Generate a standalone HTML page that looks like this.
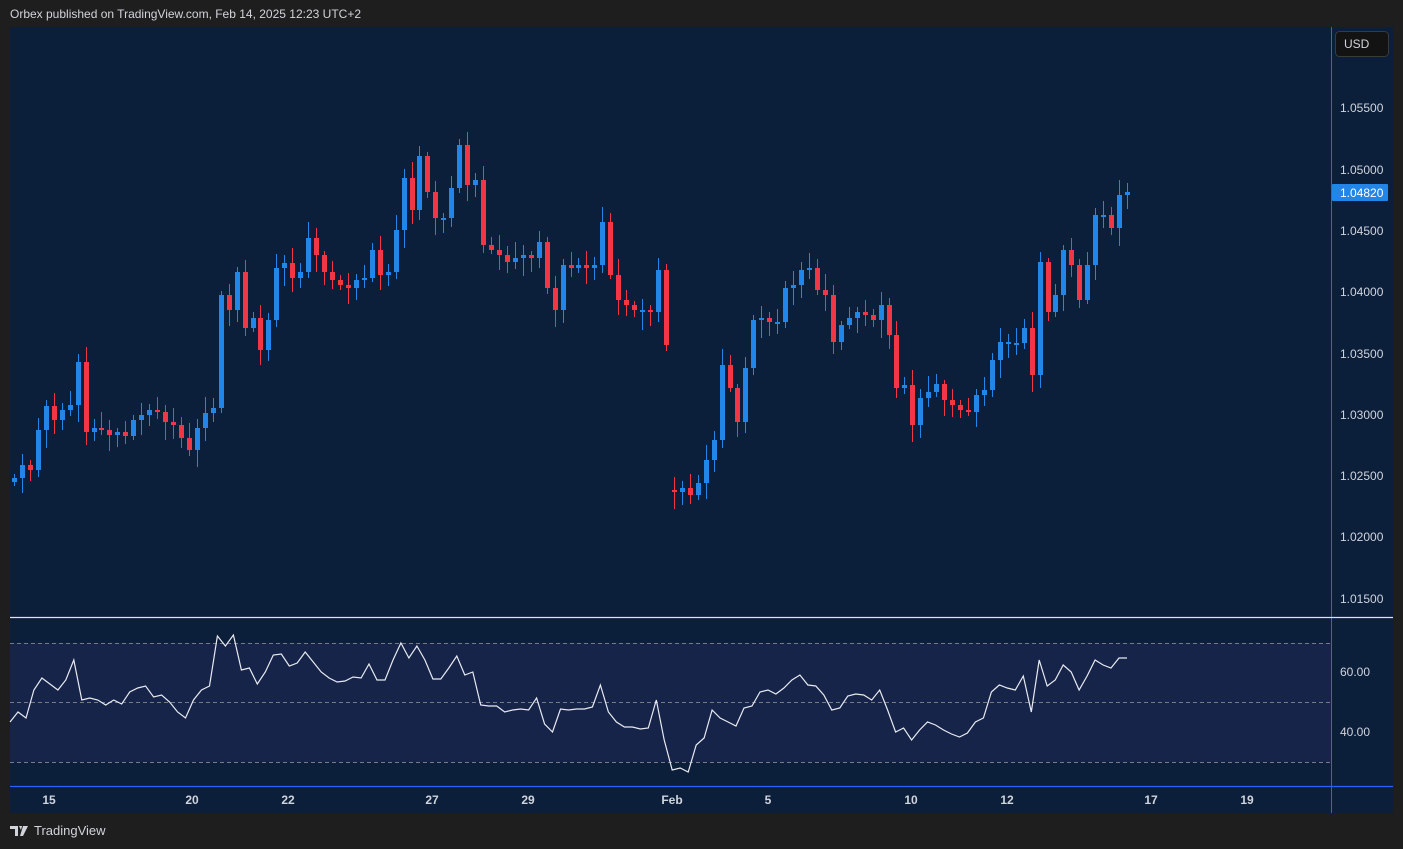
<!DOCTYPE html>
<html><head><meta charset="utf-8"><style>
html,body{margin:0;padding:0;background:#1e1e1e;width:1403px;height:849px;overflow:hidden;font-family:"Liberation Sans",sans-serif}
#hdr{position:absolute;left:10px;top:7px;font-size:12px;color:#d1d4dc}
#ft{position:absolute;left:10px;top:823px;font-size:13px;color:#d1d4dc;display:flex;align-items:center;gap:4px}
svg{position:absolute;left:0;top:0}
</style></head><body>
<div id="hdr">Orbex published on TradingView.com, Feb 14, 2025 12:23 UTC+2</div>
<svg id="s" width="1403" height="849"></svg>
<div id="ft"><svg style="position:static" width="20" height="12" viewBox="0 0 20 12"><path d="M0 1h8v10H5V4H0z M9 1h3l-1 4z M13 1h5l-5 10h-3z" fill="#d1d4dc"/></svg>TradingView</div>
<script>
const NS="http://www.w3.org/2000/svg",s=document.getElementById('s');
function el(t,a,txt){const e=document.createElementNS(NS,t);for(const k in a)e.setAttribute(k,a[k]);if(txt)e.textContent=txt;s.appendChild(e);return e;}
el('rect',{x:10,y:27,width:1383,height:786,fill:'#0b1e3a'});
el('rect',{x:10,y:643,width:1321,height:119,fill:'#16244a'});
el('line',{x1:1331.5,y1:27,x2:1331.5,y2:813,stroke:'#2962ff','stroke-width':1});
el('line',{x1:10,y1:617.5,x2:1393,y2:617.5,stroke:'#e0e3eb','stroke-width':1.3});
el('line',{x1:10,y1:786.5,x2:1393,y2:786.5,stroke:'#2962ff','stroke-width':1.3});
[643,702,762].forEach(y=>el('line',{x1:10,y1:y+.5,x2:1331,y2:y+.5,stroke:'#787b86','stroke-dasharray':'4 3','stroke-width':1}));
const C=[478,465,470,430,406,420,410,405,362,432,428,430,435,432,436,420,415,410,412,422,425,438,450,428,413,408,295,310,272,328,318,350,320,268,263,278,272,238,255,272,280,285,288,280,278,250,275,272,230,178,210,156,192,218,218,188,145,185,180,245,250,255,262,258,255,258,242,288,310,265,268,265,268,265,222,275,300,305,310,310,312,270,345,492,488,495,483,460,440,365,388,422,368,320,318,322,322,288,285,270,268,290,295,342,325,318,312,315,320,305,335,388,385,425,398,392,384,400,405,410,412,395,390,360,342,342,343,328,375,262,312,295,250,265,300,265,215,215,228,195,192];
const SP=(1125-12)/(C.length-1);
let prev=482;
C.forEach((c,i)=>{const x=Math.round(12+i*SP);let o=prev;if(i==83)o=490;if(Math.abs(c-o)<2)o=c+2;
const up=c<o,col=up?'#2186e8':'#f23645';const top=Math.min(o,c),bot=Math.max(o,c);
const w1=4+((i*7)%13),w2=4+((i*11)%15);
el('line',{x1:x+2.5,y1:top-w1,x2:x+2.5,y2:bot+w2,stroke:col,'stroke-width':1});
el('rect',{x:x,y:top,width:5,height:Math.max(2,bot-top),fill:col});prev=c;});
const R=[722,712,718,690,678,684,690,680,660,700,698,700,705,700,704,692,688,686,697,695,702,712,718,700,690,686,636,646,635,670,668,684,672,655,654,666,663,652,662,672,678,682,681,677,678,664,680,680,660,643,658,646,660,679,679,668,656,675,672,705,706,706,712,710,709,710,698,724,732,709,710,709,709,707,685,712,722,727,727,729,728,700,740,770,768,772,745,738,710,718,722,726,708,706,692,690,694,688,680,675,685,686,695,710,708,696,694,695,700,690,710,732,728,740,730,722,725,730,734,737,733,722,718,692,685,688,690,676,712,660,686,680,665,672,690,676,660,665,668,658,658];
const RS=(1127-10)/(R.length-1);
el('polyline',{points:R.map((y,i)=>(10+i*RS).toFixed(1)+','+y).join(' '),fill:'none',stroke:'#e8eaf0','stroke-width':1.2});
[['1.05500',108],['1.05000',170],['1.04500',231],['1.04000',292],['1.03500',354],['1.03000',415],['1.02500',476],['1.02000',537],['1.01500',599],['60.00',672],['40.00',732]].forEach(([t,y])=>el('text',{x:1340,y:y+4,fill:'#d1d4dc','font-size':12,'font-family':'Liberation Sans'},t));
el('rect',{x:1332,y:184,width:56,height:17,fill:'#2186e8',rx:1});
el('text',{x:1340,y:197,fill:'#fff','font-size':12},'1.04820');
el('rect',{x:1335.5,y:31.5,width:53,height:25,fill:'#131313',stroke:'#3a3a3a',rx:4});
el('text',{x:1344,y:48,fill:'#d1d4dc','font-size':12},'USD');
[['15',49],['20',192],['22',288],['27',432],['29',528],['Feb',672],['5',768],['10',911],['12',1007],['17',1151],['19',1247]].forEach(([t,x])=>el('text',{x:x,y:804,fill:'#d1d4dc','font-size':12,'font-weight':'bold','text-anchor':'middle'},t));
</script>
</body></html>
